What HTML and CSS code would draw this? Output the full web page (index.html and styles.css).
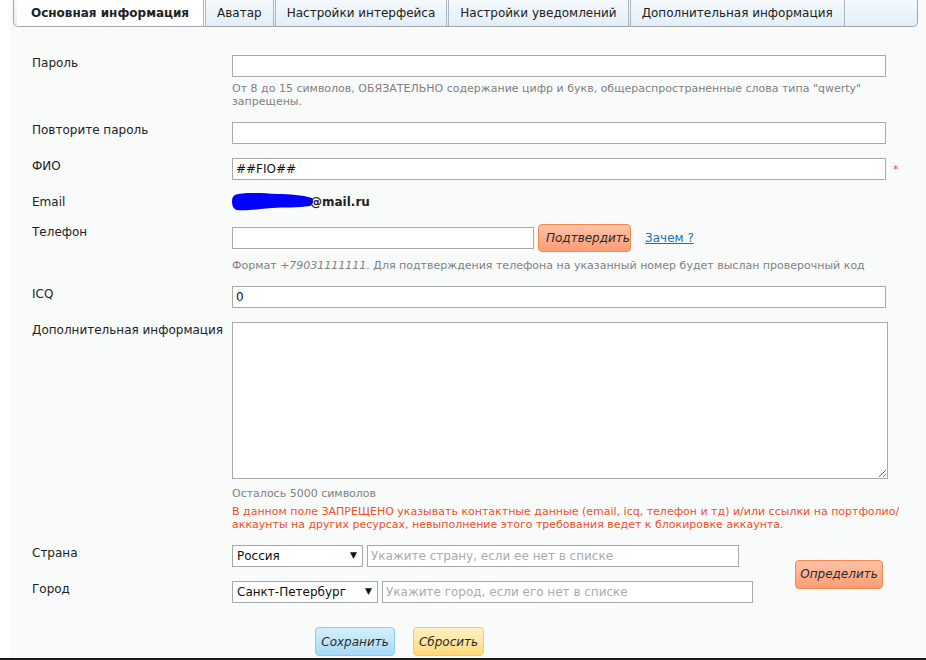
FILE: index.html
```html
<!DOCTYPE html>
<html lang="ru">
<head>
<meta charset="utf-8">
<title>Профиль</title>
<link rel="stylesheet" href="styles.css">
</head>
<body>
<div class="frame">
  <div class="panel">
    <nav class="tabs">
      <a class="tab active">Основная информация</a>
      <a class="tab">Аватар</a>
      <a class="tab">Настройки интерфейса</a>
      <a class="tab">Настройки уведомлений</a>
      <a class="tab last">Дополнительная информация</a>
    </nav>
    <form class="form">
      <div class="row">
        <label class="lbl">Пароль</label>
        <div class="field">
          <input class="inp" type="password">
          <p class="hint">От 8 до 15 символов, ОБЯЗАТЕЛЬНО содержание цифр и букв, общераспространенные слова типа "qwerty" запрещены.</p>
        </div>
      </div>
      <div class="row">
        <label class="lbl">Повторите пароль</label>
        <div class="field"><input class="inp" type="password"></div>
      </div>
      <div class="row">
        <label class="lbl">ФИО</label>
        <div class="field inline"><input class="inp" type="text" value="##FIO##"><span class="req">*</span></div>
      </div>
      <div class="row email-row">
        <label class="lbl">Email</label>
        <div class="field email">
          <svg class="scribble" width="82" height="20" viewBox="0 0 82 20"><path d="M3 4 C10 1 30 2 45 3 C58 3 70 4 80 7 C82 9 81 14 78 15 C66 17 52 16 40 17 C28 18 14 20 5 19 C1 18 0 14 0 10 C0 7 1 5 3 4 Z" fill="#0000ff"/></svg><b class="mail">@mail.ru</b>
        </div>
      </div>
      <div class="row">
        <label class="lbl">Телефон</label>
        <div class="field">
          <div class="phone">
            <input class="inp phone-inp" type="text">
            <button type="button" class="btn btn-orange confirm">Подтвердить</button>
            <a class="why" href="#">Зачем ?</a>
          </div>
          <p class="hint phone-hint">Формат <i>+79031111111</i>. Для подтверждения телефона на указанный номер будет выслан проверочный код</p>
        </div>
      </div>
      <div class="row">
        <label class="lbl">ICQ</label>
        <div class="field"><input class="inp" type="text" value="0"></div>
      </div>
      <div class="row">
        <label class="lbl">Дополнительная информация</label>
        <div class="field">
          <textarea class="area"></textarea>
          <p class="hint counter">Осталось 5000 символов</p>
          <p class="warn">В данном поле ЗАПРЕЩЕНО указывать контактные данные (email, icq, телефон и тд) и/или ссылки на портфолио/ аккаунты на других ресурсах, невыполнение этого требования ведет к блокировке аккаунта.</p>
        </div>
      </div>
      <div class="loc">
        <div class="loc-rows">
          <div class="row">
            <label class="lbl">Страна</label>
            <div class="field inline">
              <span class="sel sel-country"><select><option>Россия</option></select></span>
              <input class="inp country-inp" type="text" placeholder="Укажите страну, если ее нет в списке">
            </div>
          </div>
          <div class="row">
            <label class="lbl">Город</label>
            <div class="field inline">
              <span class="sel sel-city"><select><option>Санкт-Петербург</option></select></span>
              <input class="inp city-inp" type="text" placeholder="Укажите город, если его нет в списке">
            </div>
          </div>
        </div>
        <button type="button" class="btn btn-orange detect">Определить</button>
      </div>
      <div class="actions">
        <button type="button" class="btn btn-blue">Сохранить</button>
        <button type="button" class="btn btn-yellow">Сбросить</button>
      </div>
    </form>
  </div>
</div>
</body>
</html>
```
FILE: styles.css
```css
* { box-sizing: border-box; }
body {
  margin: 0;
  background: #fff;
  font-family: "DejaVu Sans", Verdana, sans-serif;
  font-size: 12px;
  color: #222;
}
.frame {
  height: 660px;
  border-bottom: 2px solid #1b1b1b;
  overflow: hidden;
}
.panel {
  margin-left: 10px;
  height: 100%;
  background: #f9fbfb;
}
.tabs {
  display: flex;
  height: 27px;
  margin: 0 8px 0 3px;
  padding-left: 3px;
  border: 1px solid #a6a6a6;
  border-top: 0;
  border-radius: 0 0 5px 5px;
  background: linear-gradient(#f5f9fd, #e1eef9);
}
.tab {
  display: block;
  padding: 0 11px;
  line-height: 26px;
  font-size: 12px;
  color: #222;
  border-right: 3px double #adb5be;
  white-space: nowrap;
}
.tab.active {
  background: #fff;
  font-weight: bold;
  padding: 0 14px;
}
.tab.last { border-right: 1px solid #adb5be; }

.form {
  display: flex;
  flex-direction: column;
  gap: 14px;
  padding: 28px 0 0 22px;
}
.row {
  display: grid;
  grid-template-columns: 200px 1fr;
  align-items: start;
}
.lbl {
  padding-top: 1px;
  line-height: 15px;
  color: #222;
}
.field.inline {
  display: flex;
  align-items: center;
  gap: 4px;
}
.inp {
  display: block;
  width: 654px;
  height: 22px;
  margin: 0;
  padding: 0 3px;
  border: 1px solid #a9a9a9;
  background: #fff;
  font-family: "DejaVu Sans", Verdana, sans-serif;
  font-size: 12px;
  color: #111;
}
.inp::placeholder { color: #a9abb0; }
.req {
  color: #f0501e;
  margin-left: 3px;
  font-size: 11px;
}
.hint {
  margin: 5px 0 0;
  font-size: 11px;
  line-height: 13px;
  color: #808080;
  width: 654px;
}
.email {
  display: flex;
  align-items: center;
  height: 16px;
}
.scribble { margin: -4px -4px -2px 0; }
.mail { font-size: 12px; color: #222; }
.phone {
  display: flex;
  align-items: center;
}
.phone-inp { width: 302px; }
.confirm {
  width: 93px;
  padding: 0;
  margin-left: 4px;
}
.why {
  margin-left: 14px;
  font-size: 12px;
  color: #1f72a6;
  text-decoration: underline;
}
.phone-hint { margin-top: 7px; width: 680px; }
.area {
  display: block;
  width: 656px;
  height: 157px;
  margin: 0;
  border: 1px solid #a9a9a9;
  background: #fff;
}
.counter { margin-top: 8px; }
.warn {
  margin: 5px 0 0;
  width: 685px;
  font-size: 11px;
  line-height: 13px;
  color: #f0501e;
}
.loc {
  display: flex;
  align-items: center;
}
.loc-rows {
  width: 763px;
  display: flex;
  flex-direction: column;
  gap: 14px;
}
.sel {
  position: relative;
  display: block;
  height: 22px;
  border: 1px solid #a9a9a9;
  background: #fff;
}
.sel::after {
  content: "▼";
  position: absolute;
  right: 5px;
  top: 4px;
  font-size: 9px;
  color: #111;
  pointer-events: none;
}
.sel select {
  appearance: none;
  -webkit-appearance: none;
  width: 100%;
  height: 100%;
  border: 0;
  background: transparent;
  padding: 0 4px;
  font-family: "DejaVu Sans", Verdana, sans-serif;
  font-size: 12px;
  color: #111;
}
.sel-country { width: 131px; }
.sel-city { width: 146px; }
.country-inp { width: 372px; }
.city-inp { width: 371px; }

.btn {
  height: 28px;
  padding: 0 7px;
  border-radius: 4px;
  border: 1px solid #f08848;
  font-family: "DejaVu Sans", Verdana, sans-serif;
  font-size: 12px;
  font-style: italic;
  color: #2a2a2a;
  cursor: pointer;
}
.btn-orange {
  background: linear-gradient(#ffc3a8, #ff9c75);
  border-color: #f48a4c;
}
.detect { width: 88px; height: 29px; padding: 0; }
.actions {
  display: flex;
  gap: 18px;
  margin-top: 10px;
  padding-left: 283px;
}
.btn-blue {
  width: 80px;
  height: 29px;
  padding: 0;
  background: linear-gradient(#d6effc, #a6daf7);
  border-color: #8fcbea;
}
.btn-yellow {
  width: 71px;
  height: 29px;
  padding: 0;
  background: linear-gradient(#fff1c6, #ffd978);
  border-color: #f3cc6a;
}
```
